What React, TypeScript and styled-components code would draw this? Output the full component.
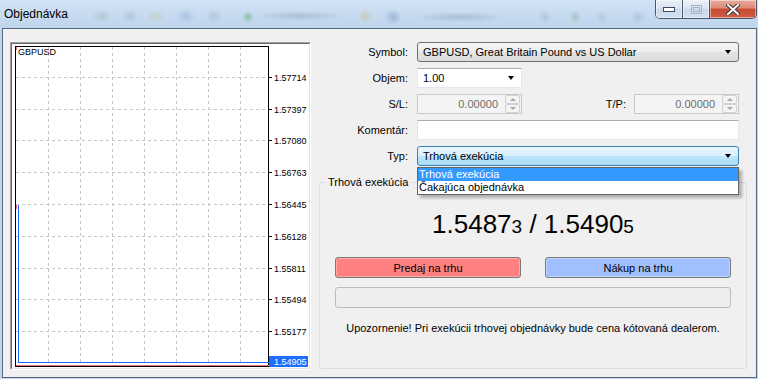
import React from 'react'
import styled, { createGlobalStyle } from 'styled-components'

const GlobalStyle = createGlobalStyle`
  html, body {
    margin: 0;
    padding: 0;
    background: #fff;
  }
  body {
    font-family: "Liberation Sans", Arial, sans-serif;
    font-size: 11px;
    color: #000;
  }
`

const Window = styled.div`
  width: 758px;
  height: 379px;
  box-sizing: border-box;
  display: flex;
  flex-direction: column;
  padding: 0 1px 1px 2px;
  background: #c2d7ee;
`

const TitleBar = styled.div`
  height: 28px;
  display: flex;
  align-items: flex-start;
  margin-left: -2px;
  margin-right: -1px;
  padding-left: 4px;
  background:
    radial-gradient(ellipse 10px 7px at 102px 16px, rgba(120, 150, 120, 0.25), transparent),
    radial-gradient(ellipse 9px 7px at 130px 16px, rgba(130, 140, 160, 0.25), transparent),
    radial-gradient(ellipse 10px 7px at 156px 16px, rgba(200, 190, 120, 0.3), transparent),
    radial-gradient(ellipse 9px 8px at 186px 16px, rgba(110, 150, 200, 0.3), transparent),
    radial-gradient(ellipse 9px 8px at 214px 16px, rgba(130, 150, 170, 0.25), transparent),
    radial-gradient(ellipse 6px 6px at 248px 17px, rgba(60, 160, 80, 0.45), transparent),
    radial-gradient(ellipse 45px 5px at 300px 16px, rgba(90, 110, 130, 0.25), transparent),
    radial-gradient(ellipse 8px 7px at 365px 16px, rgba(200, 180, 90, 0.35), transparent),
    radial-gradient(ellipse 9px 8px at 393px 17px, rgba(90, 120, 170, 0.35), transparent),
    radial-gradient(ellipse 48px 5px at 460px 17px, rgba(90, 110, 130, 0.25), transparent),
    radial-gradient(ellipse 7px 7px at 545px 17px, rgba(120, 140, 160, 0.25), transparent),
    radial-gradient(ellipse 6px 7px at 575px 17px, rgba(80, 160, 90, 0.3), transparent),
    radial-gradient(ellipse 7px 7px at 602px 17px, rgba(120, 140, 160, 0.2), transparent),
    radial-gradient(ellipse 8px 7px at 638px 17px, rgba(110, 140, 170, 0.25), transparent),
    linear-gradient(to bottom, #d3e3f4 0%, #c6daf0 55%, #bfd5ed 100%);
`

const Title = styled.div`
  flex: 1;
  font-size: 12px;
  line-height: 28px;
  color: #000;
`

const CaptionGroup = styled.div`
  display: flex;
  height: 19px;
  margin-right: 1px;
  border: 1px solid #47586c;
  border-top: none;
  border-radius: 0 0 5px 5px;
  overflow: hidden;
  box-sizing: border-box;
`

const CaptionButton = styled.div<{ $w: number; $close?: boolean }>`
  width: ${p => p.$w}px;
  display: flex;
  align-items: center;
  justify-content: center;
  box-sizing: border-box;
  box-shadow: inset 0 0 0 1px rgba(255, 255, 255, 0.45);
  background: ${p =>
    p.$close
      ? 'linear-gradient(to bottom, #e8ab9d 0%, #dc8a76 45%, #c84b34 50%, #cf5c43 100%)'
      : 'linear-gradient(to bottom, #e9f0f8 0%, #dbe5f1 45%, #cad8e9 50%, #d3dfee 100%)'};
  & + & {
    border-left: 1px solid #47586c;
  }
`

const Client = styled.div`
  flex: 1;
  display: flex;
  align-items: flex-start;
  gap: 8px;
  border: 1px solid #58677a;
  background: #f0f0f0;
  padding: 13px 0 0 7px;
`

const ChartFrame = styled.div`
  width: 301px;
  height: 328px;
  box-sizing: border-box;
  border: 1px solid;
  border-color: #a0a0a0 #ffffff #ffffff #a0a0a0;
`

const ChartInner = styled.div`
  width: 299px;
  height: 326px;
  box-sizing: border-box;
  border: 1px solid;
  border-color: #696969 #e3e3e3 #e3e3e3 #696969;
  background: #fff;
  svg {
    display: block;
  }
`

const Form = styled.div`
  width: 428px;
  display: flex;
  flex-direction: column;
`

const Row = styled.div<{ $last?: boolean }>`
  display: grid;
  grid-template-columns: 89px 322px;
  column-gap: 9px;
  align-items: center;
  height: 20px;
  margin-bottom: ${p => (p.$last ? 0 : 6)}px;
`

const Label = styled.div`
  text-align: right;
  white-space: nowrap;
`

const FieldWrap = styled.div`
  position: relative;
  display: flex;
  align-items: center;
  height: 20px;
`

const Combo = styled.div<{ $w?: number; $variant: 'list' | 'edit' | 'focus' }>`
  width: ${p => (p.$w ? `${p.$w}px` : '100%')};
  height: 20px;
  box-sizing: border-box;
  display: flex;
  align-items: center;
  padding: 0 5px 0 5px;
  border-radius: ${p => (p.$variant === 'edit' ? 0 : 3)}px;
  border: 1px solid
    ${p => (p.$variant === 'list' ? '#707070' : p.$variant === 'focus' ? '#3c7fb1' : '#e3e9ef')};
  ${p => p.$variant === 'edit' && 'border-top-color: #abadb3;'}
  background: ${p =>
    p.$variant === 'list'
      ? 'linear-gradient(to bottom, #f6f6f6 0%, #ededed 50%, #e3e3e3 50%, #dcdcdc 100%)'
      : p.$variant === 'focus'
      ? 'linear-gradient(to bottom, #eaf6fd 0%, #d9f0fc 50%, #bee6fd 50%, #a7d9f5 100%)'
      : '#ffffff'};
`

const ComboText = styled.span`
  flex: 1;
  white-space: nowrap;
`

const Arrow = styled.span`
  width: 0;
  height: 0;
  border-left: 3.5px solid transparent;
  border-right: 3.5px solid transparent;
  border-top: 4px solid #000;
  margin-right: 2px;
`

const TextInput = styled.div`
  width: 100%;
  height: 20px;
  box-sizing: border-box;
  background: #fff;
  border: 1px solid;
  border-color: #abadb3 #e3e9ef #e3e9ef #e2e3ea;
`

const SpinRow = styled.div`
  display: flex;
  align-items: center;
  width: 100%;
`

const SpinLabel = styled.div`
  flex: 1;
  text-align: right;
  padding-right: 8px;
`

const Spin = styled.div`
  width: 105px;
  height: 20px;
  box-sizing: border-box;
  display: flex;
  align-items: center;
  border: 1px solid #c5c9ce;
  background: #f4f4f4;
  color: #6d6d6d;
`

const SpinValue = styled.span`
  flex: 1;
  text-align: right;
  padding-right: 7px;
`

const SpinButtons = styled.div`
  width: 15px;
  height: 18px;
  margin-right: 1px;
  display: flex;
  flex-direction: column;
`

const SpinHalf = styled.div<{ $down?: boolean }>`
  flex: 1;
  display: flex;
  align-items: center;
  justify-content: center;
  border: 1px solid #d2d2d2;
  border-radius: 2px;
  background: #f4f4f4;
  &::after {
    content: '';
    width: 0;
    height: 0;
    border-left: 3px solid transparent;
    border-right: 3px solid transparent;
    ${p =>
      p.$down ? 'border-top: 3px solid #a8a8a8;' : 'border-bottom: 3px solid #a8a8a8;'}
  }
`

const DropList = styled.div`
  position: absolute;
  top: 21px;
  left: 0;
  width: 322px;
  box-sizing: border-box;
  border: 1px solid #646464;
  background: #fff;
  box-shadow: 3px 3px 3px rgba(0, 0, 0, 0.28);
  z-index: 5;
`

const DropItem = styled.div<{ $active?: boolean }>`
  height: 13px;
  line-height: 13px;
  padding-left: 1px;
  white-space: nowrap;
  background: ${p => (p.$active ? '#3399ff' : '#fff')};
  color: ${p => (p.$active ? '#fff' : '#000')};
`

const GroupBox = styled.div`
  position: relative;
  margin-top: 16px;
  width: 428px;
  height: 187px;
  box-sizing: border-box;
  border: 1px solid #d5dfe5;
  border-radius: 3px;
  padding: 0 15px;
  display: flex;
  flex-direction: column;
  align-items: center;
`

const Legend = styled.div`
  position: absolute;
  top: -8px;
  left: 6px;
  padding: 0 2px;
  line-height: 14px;
  background: #f0f0f0;
`

const PriceLine = styled.div`
  margin-top: 27px;
  height: 28px;
  line-height: 28px;
  white-space: nowrap;
`

const Big = styled.span`
  font-size: 26px;
`

const Small = styled.span`
  font-size: 19px;
`

const ButtonRow = styled.div`
  margin-top: 19px;
  display: flex;
  gap: 24px;
`

const TradeButton = styled.div<{ $color: string }>`
  width: 186px;
  height: 21px;
  box-sizing: border-box;
  display: flex;
  align-items: center;
  justify-content: center;
  border: 1px solid #7a7a7a;
  border-radius: 3px;
  background: ${p => p.$color};
  box-shadow: inset 0 0 0 1px rgba(255, 255, 255, 0.3);
`

const StatusBar = styled.div`
  margin-top: 9px;
  width: 396px;
  height: 21px;
  box-sizing: border-box;
  border: 1px solid #bcbcbc;
  border-radius: 3px;
  background: #eeeeee;
`

const Notice = styled.div`
  margin-top: 13px;
  line-height: 14px;
  white-space: nowrap;
`

const gridY = [33, 65, 96, 128, 160, 192, 224, 255, 287]
const gridX = [36, 68, 100, 132, 164, 196, 228]
const prices = ['1.57714', '1.57397', '1.57080', '1.56763', '1.56445', '1.56128', '1.55811', '1.55494', '1.55177']

const Chart: React.FC = () => (
  <svg width={297} height={324} viewBox="0 0 297 324" fontFamily='"Liberation Sans", Arial, sans-serif' fontSize={9}>
    {gridY.map(y => (
      <line key={'h' + y} x1={4} x2={256} y1={y + 0.5} y2={y + 0.5} stroke="#c6c6c6" strokeDasharray="3 3" />
    ))}
    {gridX.map(x => (
      <line key={'v' + x} x1={x + 0.5} x2={x + 0.5} y1={3} y2={322} stroke="#c6c6c6" strokeDasharray="3 3" />
    ))}
    <rect x={3.5} y={2.5} width={253} height={320} fill="none" stroke="#000" />
    {gridY.map((y, i) => (
      <g key={'t' + y}>
        <line x1={257} x2={260} y1={y + 0.5} y2={y + 0.5} stroke="#000" />
        <text x={262} y={y + 4} fill="#000">{prices[i]}</text>
      </g>
    ))}
    <line x1={4} x2={257} y1={321.5} y2={321.5} stroke="#f06a6a" />
    <line x1={4.5} x2={4.5} y1={161} y2={165} stroke="#f06a6a" />
    <line x1={4.5} x2={4.5} y1={3} y2={6} stroke="#f06a6a" />
    <line x1={6.5} x2={6.5} y1={161} y2={318.5} stroke="#1a66ff" />
    <line x1={6} x2={257} y1={318.5} y2={318.5} stroke="#1a66ff" />
    <rect x={257} y={312} width={39} height={11} fill="#1e6eff" />
    <text x={262} y={321} fill="#fff">1.54905</text>
    <text x={6} y={11} fill="#000">GBPUSD</text>
  </svg>
)

const App: React.FC = () => {
  return (
    <>
      <GlobalStyle />
      <Window>
        <TitleBar>
          <Title>Objednávka</Title>
          <CaptionGroup>
            <CaptionButton $w={26}>
              <svg width="12" height="5" viewBox="0 0 12 5">
                <rect x="0.5" y="0.5" width="11" height="4" fill="#fff" stroke="#3a4a5c" />
              </svg>
            </CaptionButton>
            <CaptionButton $w={27}>
              <svg width="11" height="9" viewBox="0 0 11 9">
                <rect x="0.5" y="0.5" width="10" height="8" fill="none" stroke="#a7b4c4" />
                <rect x="2.5" y="2.5" width="6" height="4" fill="none" stroke="#a7b4c4" />
              </svg>
            </CaptionButton>
            <CaptionButton $w={47} $close>
              <svg width="14" height="11" viewBox="0 0 14 11">
                <path d="M2 1 L12 10 M12 1 L2 10" stroke="#3b3b3b" strokeWidth="4" strokeLinecap="square" />
                <path d="M2 1 L12 10 M12 1 L2 10" stroke="#fff" strokeWidth="2" strokeLinecap="square" />
              </svg>
            </CaptionButton>
          </CaptionGroup>
        </TitleBar>
        <Client>
          <ChartFrame>
            <ChartInner>
              <Chart />
            </ChartInner>
          </ChartFrame>
          <Form>
            <Row>
              <Label>Symbol:</Label>
              <FieldWrap>
                <Combo $variant="list">
                  <ComboText>GBPUSD, Great Britain Pound vs US Dollar</ComboText>
                  <Arrow />
                </Combo>
              </FieldWrap>
            </Row>
            <Row>
              <Label>Objem:</Label>
              <FieldWrap>
                <Combo $variant="edit" $w={105}>
                  <ComboText>1.00</ComboText>
                  <Arrow />
                </Combo>
              </FieldWrap>
            </Row>
            <Row>
              <Label>S/L:</Label>
              <SpinRow>
                <Spin>
                  <SpinValue>0.00000</SpinValue>
                  <SpinButtons>
                    <SpinHalf />
                    <SpinHalf $down />
                  </SpinButtons>
                </Spin>
                <SpinLabel>T/P:</SpinLabel>
                <Spin>
                  <SpinValue>0.00000</SpinValue>
                  <SpinButtons>
                    <SpinHalf />
                    <SpinHalf $down />
                  </SpinButtons>
                </Spin>
              </SpinRow>
            </Row>
            <Row>
              <Label>Komentár:</Label>
              <TextInput />
            </Row>
            <Row $last>
              <Label>Typ:</Label>
              <FieldWrap>
                <Combo $variant="focus">
                  <ComboText>Trhová exekúcia</ComboText>
                  <Arrow />
                </Combo>
                <DropList>
                  <DropItem $active>Trhová exekúcia</DropItem>
                  <DropItem>Čakajúca objednávka</DropItem>
                </DropList>
              </FieldWrap>
            </Row>
            <GroupBox>
              <Legend>Trhová exekúcia</Legend>
              <PriceLine>
                <Big>1.5487</Big>
                <Small>3</Small>
                <Big> / 1.5490</Big>
                <Small>5</Small>
              </PriceLine>
              <ButtonRow>
                <TradeButton $color="#ff8080">Predaj na trhu</TradeButton>
                <TradeButton $color="#a0bfff">Nákup na trhu</TradeButton>
              </ButtonRow>
              <StatusBar />
              <Notice>Upozornenie! Pri exekúcii trhovej objednávky bude cena kótovaná dealerom.</Notice>
            </GroupBox>
          </Form>
        </Client>
      </Window>
    </>
  )
}

export default App
